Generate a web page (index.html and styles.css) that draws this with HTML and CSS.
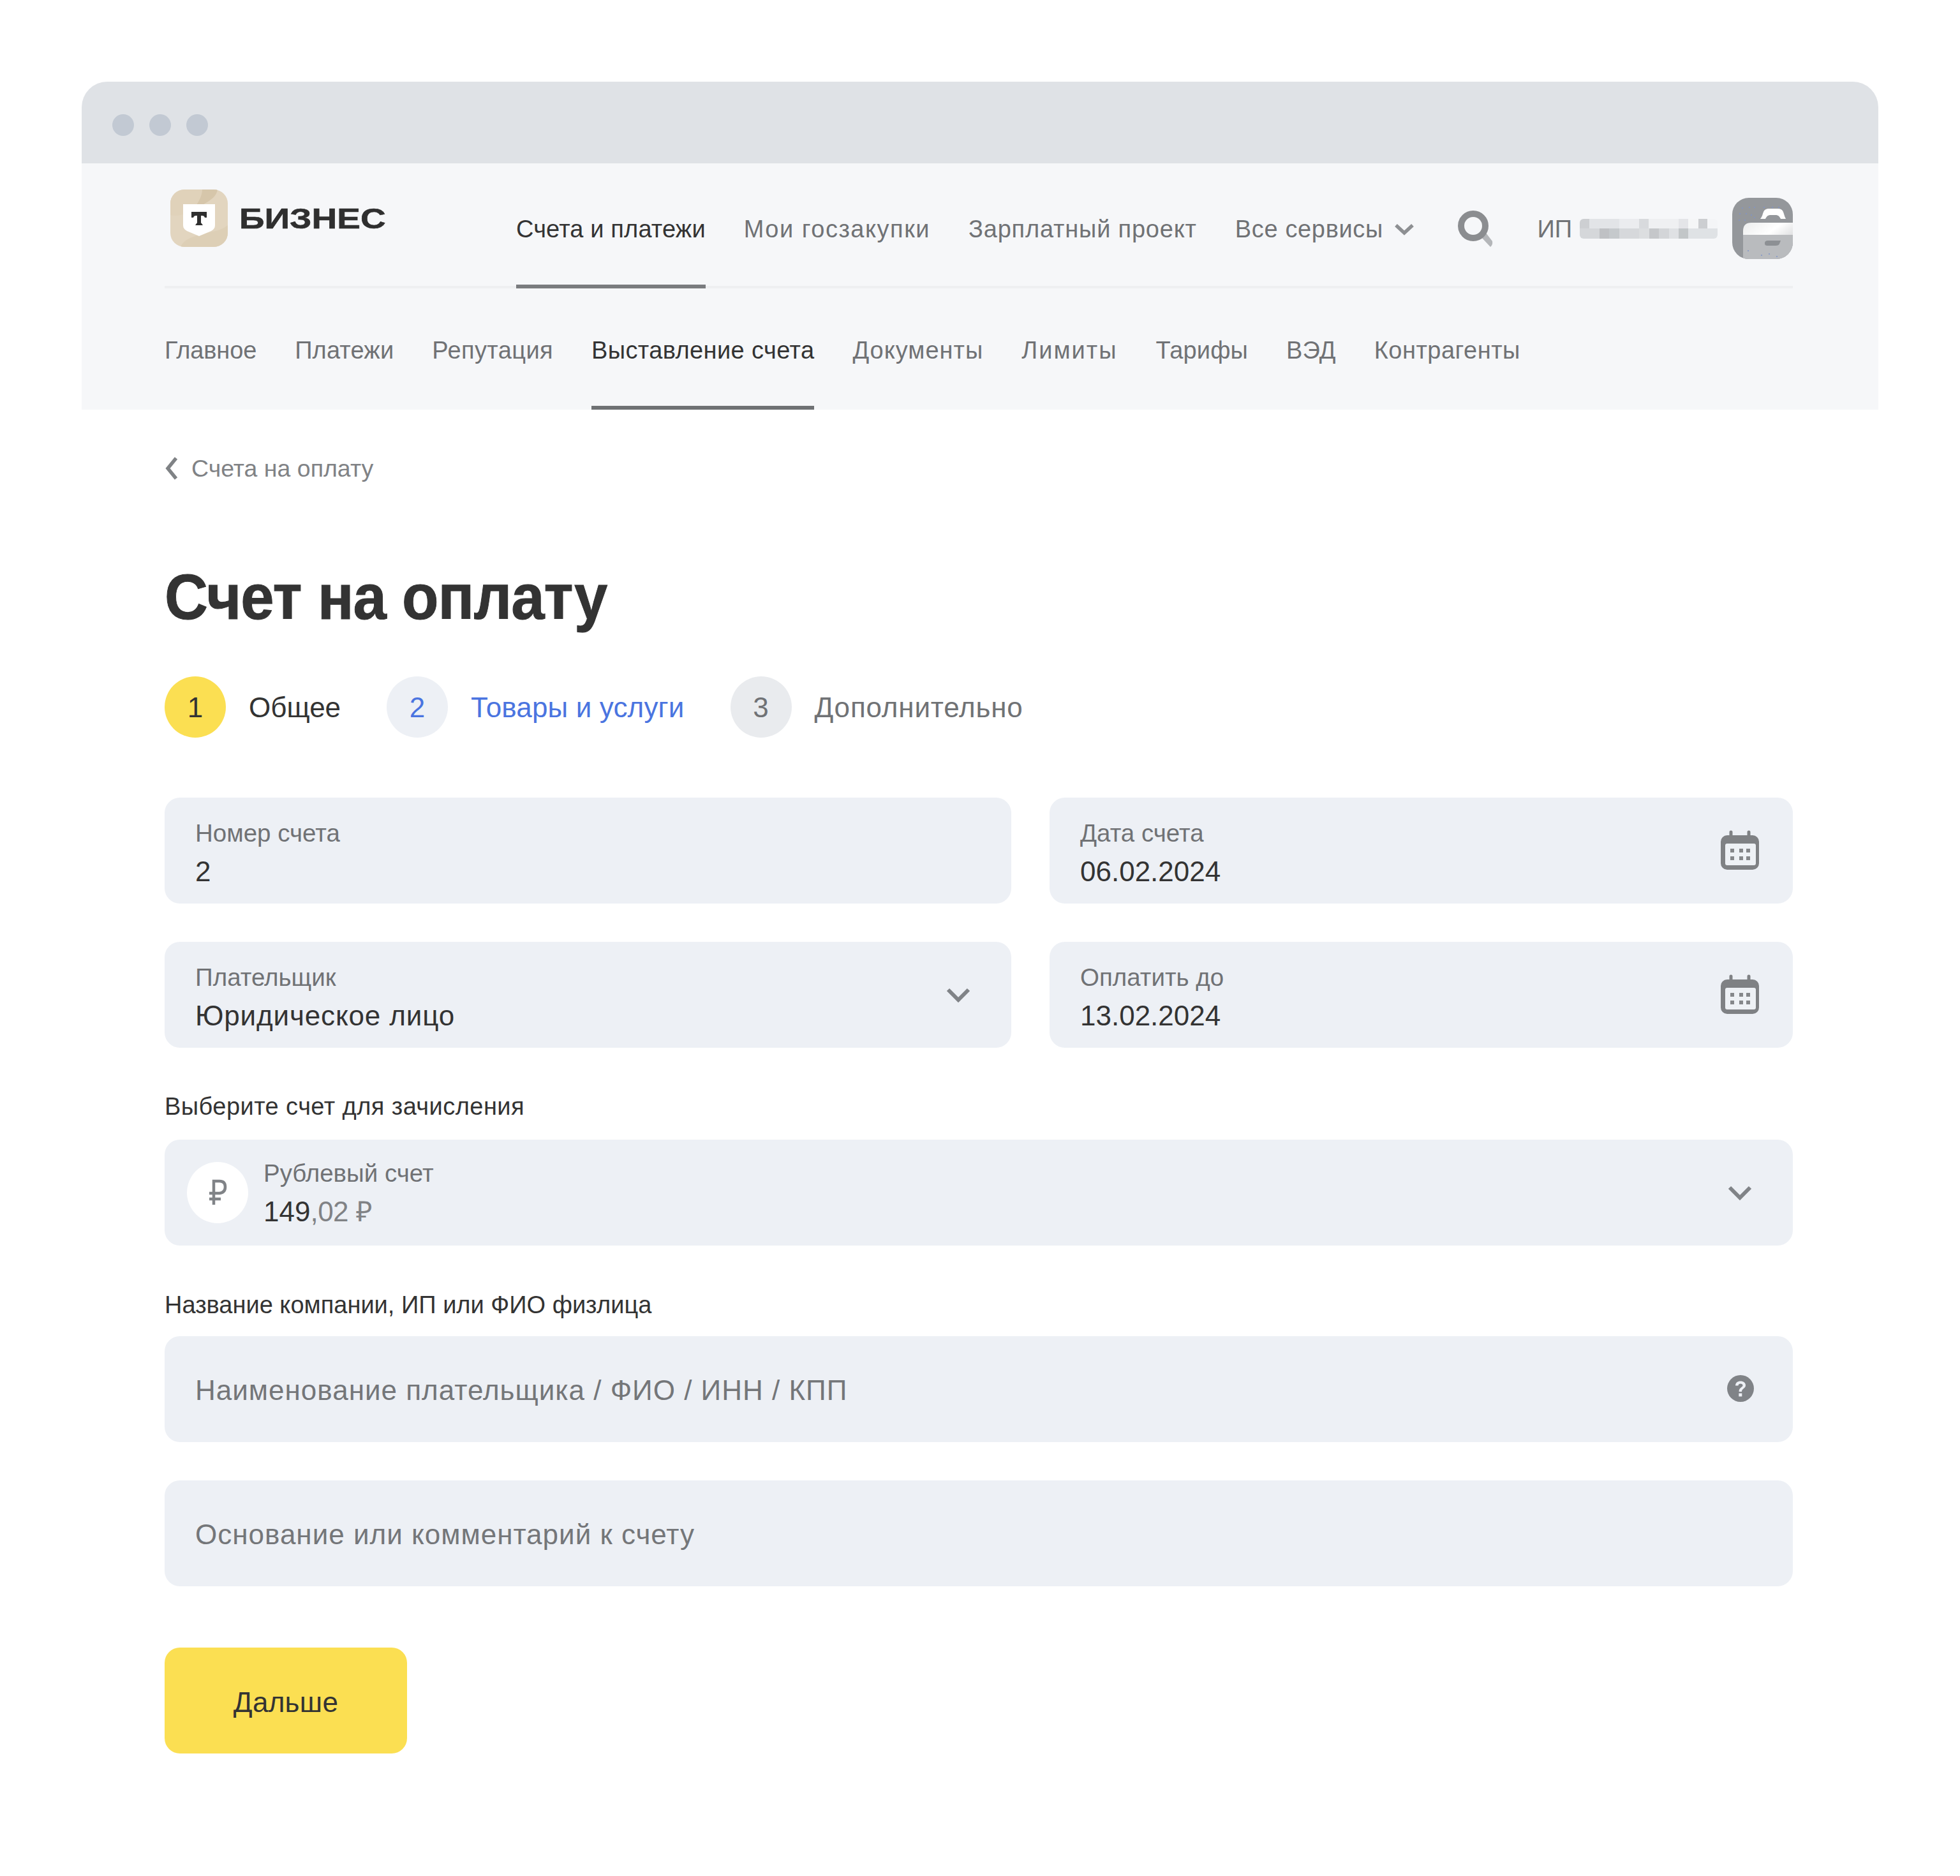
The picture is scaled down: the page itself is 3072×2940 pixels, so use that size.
FILE: index.html
```html
<!DOCTYPE html>
<html lang="ru">
<head>
<meta charset="utf-8">
<title>Счет на оплату</title>
<link rel="stylesheet" href="styles.css">
</head>
<body>
<div class="window">
  <div class="titlebar"><i class="dot"></i><i class="dot"></i><i class="dot"></i></div>
  <header class="header">
    <div class="toprow">
      <div class="brand">
        <svg class="logo" width="90" height="90" viewBox="0 0 90 90">
          <defs><clipPath id="logoclip"><rect width="90" height="90" rx="22"/></clipPath></defs>
          <g clip-path="url(#logoclip)">
            <rect width="90" height="90" fill="#e2d5bf"/>
            <path d="M0 0H74C72 12 62 17 50 24C30 36 14 44 0 40Z" fill="#e0d2ba"/>
            <path d="M50 0H74C72 10 66 15 54 22L36 32C44 20 50 10 50 0Z" fill="#d6c6aa"/>
            <path d="M90 56V90H16C20 80 30 76 42 72C60 66 78 66 90 56Z" fill="#ddcfb6"/>
          </g>
          <path d="M20 23H70V56Q70 62 64 65L45 73L26 65Q20 62 20 56Z" fill="#fff"/>
          <path d="M33 35H57V44H54Q53 41 50 41H48V52L51 56H39L42 52V41H40Q37 41 36 44H33Z" fill="#2f2f2f"/>
        </svg>
        <span class="brandname">БИЗНЕС</span>
      </div>
      <nav class="mainnav">
        <a class="navlink is-active">Счета и платежи</a>
        <a class="navlink ls-gz">Мои госзакупки</a>
        <a class="navlink ls-zp">Зарплатный проект</a>
        <a class="navlink ls-vs">Все сервисы
          <svg class="chev-nav" width="34" height="22" viewBox="0 0 34 22"><path d="M4 5L17 17L30 5" fill="none" stroke="#8d8f92" stroke-width="5.5"/></svg>
        </a>
      </nav>
      <svg class="search" width="56" height="58" viewBox="0 0 56 58">
        <path d="M36 41L44 35L54 48Q55 54 51 57Z" fill="#b4b6b9"/>
        <circle cx="24" cy="24" r="19" fill="none" stroke="#8b8d90" stroke-width="10"/>
      </svg>
      <div class="account">
        <span class="acc-ip">ИП</span>
        <svg class="acc-blur" width="216" height="31" viewBox="0 0 216 31">
          <defs><clipPath id="blurclip"><rect width="216" height="31" rx="6"/></clipPath></defs>
          <g clip-path="url(#blurclip)">
            <rect x="0" y="0" width="15" height="15" fill="#cdcfd2"/>
            <rect x="15" y="0" width="47" height="15" fill="#e2e4e7"/>
            <rect x="62" y="0" width="31" height="15" fill="#ebecef"/>
            <rect x="93" y="0" width="15" height="15" fill="#d8dadd"/>
            <rect x="108" y="0" width="47" height="15" fill="#eff0f2"/>
            <rect x="155" y="0" width="15" height="15" fill="#e4e5e8"/>
            <rect x="170" y="0" width="16" height="15" fill="#f5f6f7"/>
            <rect x="186" y="0" width="14" height="15" fill="#ccced1"/>
            <rect x="200" y="0" width="16" height="15" fill="#f4f5f7"/>
            <rect x="0" y="15" width="31" height="16" fill="#d5d7da"/>
            <rect x="31" y="15" width="15" height="16" fill="#bfc1c4"/>
            <rect x="46" y="15" width="16" height="16" fill="#c5c9cc"/>
            <rect x="62" y="15" width="31" height="16" fill="#d6d8db"/>
            <rect x="93" y="15" width="16" height="16" fill="#dcdee0"/>
            <rect x="109" y="15" width="15" height="16" fill="#c5c7ca"/>
            <rect x="124" y="15" width="16" height="16" fill="#d3d5d8"/>
            <rect x="140" y="15" width="15" height="16" fill="#dfe1e4"/>
            <rect x="155" y="15" width="15" height="16" fill="#c2c6c8"/>
            <rect x="170" y="15" width="46" height="16" fill="#dfe2e5"/>
          </g>
        </svg>
        <svg class="acc-avatar" width="95" height="96" viewBox="0 0 95 96">
          <defs>
            <clipPath id="avclip"><rect width="95" height="96" rx="26"/></clipPath>
            <linearGradient id="lid" x1="0" y1="0" x2="1" y2="1"><stop offset="0" stop-color="#eceded"/><stop offset=".4" stop-color="#fff"/><stop offset="1" stop-color="#b9bbbe"/></linearGradient>
          </defs>
          <g clip-path="url(#avclip)">
            <rect width="95" height="96" fill="#94979b"/>
            <path d="M44 33C50 27 46 17 58 17H72C82 17 80 27 84 33H76C74 29 72 27 68 27H60C56 27 54 29 52 33Z" fill="#fff"/>
            <path d="M17 96V52Q17 39 30 39H95V58H17Z" fill="url(#lid)"/>
            <rect x="17" y="58" width="78" height="38" fill="#b9bbbe"/>
            <path d="M51 71Q51 67 56 67H76L74 72Q73 75 68 75H55Q51 75 51 72Z" fill="#8d9094"/>
            <g fill="#7f93c8">
              <circle cx="16" cy="16" r="1"/><circle cx="27" cy="15" r="1"/><circle cx="35" cy="15" r="1"/><circle cx="50" cy="15" r="1"/><circle cx="63" cy="15" r="1"/><circle cx="73" cy="15" r="1"/>
              <circle cx="12" cy="25" r="1"/><circle cx="22" cy="25" r="1"/><circle cx="30" cy="27" r="1"/><circle cx="11" cy="35" r="1"/><circle cx="20" cy="35" r="1"/><circle cx="35" cy="31" r="1"/>
              <circle cx="25" cy="83" r="1"/><circle cx="46" cy="90" r="1"/><circle cx="58" cy="88" r="1"/><circle cx="70" cy="92" r="1"/>
            </g>
          </g>
        </svg>
      </div>
    </div>
    <nav class="subnav">
      <a class="sublink ls-gl">Главное</a>
      <a class="sublink">Платежи</a>
      <a class="sublink ls-rep">Репутация</a>
      <a class="sublink ls-vys is-active">Выставление счета</a>
      <a class="sublink ls-doc">Документы</a>
      <a class="sublink ls-lim">Лимиты</a>
      <a class="sublink">Тарифы</a>
      <a class="sublink">ВЭД</a>
      <a class="sublink ls-kon">Контрагенты</a>
    </nav>
  </header>
  <main class="content">
    <a class="back">
      <svg width="22" height="36" viewBox="0 0 22 36"><path d="M18 2L5 18L18 34" fill="none" stroke="#7f8285" stroke-width="5.5"/></svg>
      Счета на оплату
    </a>
    <h1 class="title">Счет на оплату</h1>
    <div class="steps">
      <div class="step"><span class="num num-1">1</span><span class="step-text">Общее</span></div>
      <div class="step"><span class="num num-2">2</span><span class="step-text step-blue">Товары и услуги</span></div>
      <div class="step"><span class="num num-3">3</span><span class="step-text step-grey">Дополнительно</span></div>
    </div>
    <div class="grid">
      <div class="field"><div class="field-body"><div class="lbl">Номер счета</div><div class="val">2</div></div></div>
      <div class="field"><div class="field-body"><div class="lbl">Дата счета</div><div class="val">06.02.2024</div></div>
        <svg class="cal" width="60" height="62" viewBox="0 0 60 62"><path d="M13.500 3a2.500 2.500 0 0 1 5 0v5h23V3a2.500 2.500 0 0 1 5 0v5h3.500A10 10 0 0 1 60 18v34a10 10 0 0 1-10 10H10A10 10 0 0 1 0 52V18A10 10 0 0 1 10 8h3.500Z" fill="#7f8184"/><rect x="7" y="21" width="48" height="34" rx="3" fill="#eef1f5"/><g fill="#85878a"><rect x="15" y="29" width="6" height="6"/><rect x="29" y="29" width="6" height="6"/><rect x="40" y="29" width="6" height="6"/><rect x="15" y="41" width="6" height="6"/><rect x="29" y="41" width="6" height="6"/><rect x="40" y="41" width="6" height="6"/></g></svg>
      </div>
      <div class="field"><div class="field-body"><div class="lbl">Плательщик</div><div class="val ls-val">Юридическое лицо</div></div>
        <svg class="chev" width="40" height="26" viewBox="0 0 40 26"><path d="M4 5L20 21L36 5" fill="none" stroke="#808387" stroke-width="6"/></svg>
      </div>
      <div class="field"><div class="field-body"><div class="lbl">Оплатить до</div><div class="val">13.02.2024</div></div>
        <svg class="cal" width="60" height="62" viewBox="0 0 60 62"><path d="M13.500 3a2.500 2.500 0 0 1 5 0v5h23V3a2.500 2.500 0 0 1 5 0v5h3.500A10 10 0 0 1 60 18v34a10 10 0 0 1-10 10H10A10 10 0 0 1 0 52V18A10 10 0 0 1 10 8h3.500Z" fill="#7f8184"/><rect x="7" y="21" width="48" height="34" rx="3" fill="#eef1f5"/><g fill="#85878a"><rect x="15" y="29" width="6" height="6"/><rect x="29" y="29" width="6" height="6"/><rect x="40" y="29" width="6" height="6"/><rect x="15" y="41" width="6" height="6"/><rect x="29" y="41" width="6" height="6"/><rect x="40" y="41" width="6" height="6"/></g></svg>
      </div>
    </div>
    <div class="section-label label-first">Выберите счет для зачисления</div>
    <div class="field field-acc">
      <span class="rub-circle">
        <svg width="30" height="42" viewBox="0 0 30 42"><path d="M9 40V3H18Q27 3 27 12T18 22H2M2 31H20" fill="none" stroke="#808387" stroke-width="4.5"/></svg>
      </span>
      <div class="field-body"><div class="lbl">Рублевый счет</div><div class="val">149<span class="val-dim">,02 ₽</span></div></div>
      <svg class="chev" width="40" height="26" viewBox="0 0 40 26"><path d="M4 5L20 21L36 5" fill="none" stroke="#808387" stroke-width="6"/></svg>
    </div>
    <div class="section-label label-second">Название компании, ИП или ФИО физлица</div>
    <div class="field"><div class="field-body"><div class="ph">Наименование плательщика / ФИО / ИНН / КПП</div></div>
      <svg class="help" width="42" height="42" viewBox="0 0 42 42"><circle cx="21" cy="21" r="21" fill="#808387"/><path d="M13 16.500C13 12 16.500 9.500 21 9.500S29 12 29 16C29 21 23 21 23 26H18.500C18.500 19 24.500 19.500 24.500 16C24.500 14.500 23 13.500 21 13.500S17.500 14.700 17.500 16.500Z" fill="#edf0f5"/><rect x="18.300" y="28.500" width="5" height="5" fill="#edf0f5"/></svg>
    </div>
    <div class="field field-comment"><div class="field-body"><div class="ph">Основание или комментарий к счету</div></div></div>
    <button class="next">Дальше</button>
  </main>
</div>
</body>
</html>
```
FILE: styles.css
```css
* { box-sizing: border-box; }
html, body { margin: 0; background: #fff; }
body {
  width: 3072px;
  height: 2940px;
  padding: 128px;
  font-family: "Liberation Sans", Arial, sans-serif;
  color: #333;
}
.window { width: 2816px; }
.titlebar {
  height: 128px;
  background: #dfe2e6;
  border-radius: 40px 40px 0 0;
  display: flex;
  align-items: center;
  gap: 24px;
  padding: 8px 0 0 48px;
}
.dot { width: 34px; height: 34px; border-radius: 50%; background: #c2c9d3; }
.header { height: 386px; background: #f6f7f9; padding: 0 134px 0 130px; }
.toprow {
  height: 196px;
  display: flex;
  border-bottom: 4px solid #eeeff1;
}
.brand { width: 551px; display: flex; align-items: center; height: 90px; margin-top: 41px; padding-left: 9px; flex: none; }
.logo { flex: none; }
.brandname {
  margin-left: 18px;
  padding-top: 2px;
  font-size: 44px;
  font-weight: 700;
  color: #2f2f2f;
  -webkit-text-stroke: .6px #2f2f2f;
  transform: scaleX(1.25);
  transform-origin: left center;
}
.mainnav { display: flex; gap: 60px; height: 196px; flex: none; }
.navlink {
  font-size: 38px;
  color: #707275;
  line-height: 1;
  padding-top: 84px;
  display: flex;
  align-items: flex-start;
  white-space: nowrap;
}
.navlink.is-active { color: #333; border-bottom: 6px solid #7a7c7f; letter-spacing: .15px; }
.ls-gz { letter-spacing: 1.5px; }
.ls-zp { letter-spacing: .8px; }
.ls-vs { letter-spacing: .65px; }
.chev-nav { margin: 8px 0 0 16px; }
.search { margin: 74px 0 0 67px; flex: none; }
.account { display: flex; margin-left: auto; align-items: flex-start; }
.acc-ip { font-size: 38px; line-height: 1; color: #707275; padding-top: 84px; }
.acc-blur { margin: 87px 0 0 12px; }
.acc-avatar { margin: 54px 0 0 23px; }
.subnav { display: flex; gap: 60px; height: 190px; }
.sublink {
  font-size: 38px;
  line-height: 1;
  letter-spacing: .15px;
  color: #707275;
  padding-top: 78px;
  white-space: nowrap;
}
.sublink.is-active { color: #333; border-bottom: 6px solid #6f7174; }
.sublink.ls-gl { letter-spacing: -.15px; }
.sublink.ls-rep { letter-spacing: .4px; }
.sublink.ls-vys { letter-spacing: .4px; }
.sublink.ls-doc { letter-spacing: 1px; }
.sublink.ls-lim { letter-spacing: 2px; }
.sublink.ls-kon { letter-spacing: .5px; }
.content { padding: 0 134px 0 130px; }
.back {
  display: flex;
  align-items: center;
  gap: 20px;
  margin-top: 74px;
  height: 36px;
  font-size: 37.500px;
  color: #808285;
}
.title {
  margin: 125px 0 0;
  font-size: 100px;
  line-height: 116px;
  font-weight: 700;
  letter-spacing: -1px;
  color: #333;
  -webkit-text-stroke: 1px #333;
  transform: scaleX(.94);
  transform-origin: left center;
}
.steps { display: flex; gap: 72px; margin-top: 67px; }
.step { display: flex; align-items: center; gap: 36px; }
.num {
  width: 96px;
  height: 96px;
  border-radius: 50%;
  display: flex;
  align-items: center;
  justify-content: center;
  padding-top: 2px;
  font-size: 44px;
}
.num-1 { background: #fbdf52; color: #333; }
.num-2 { background: #edf0f5; color: #4a74e0; }
.num-3 { background: #e9ebee; color: #707275; }
.step-text { font-size: 44px; padding-top: 2px; color: #333; }
.step-blue { color: #4a74e0; letter-spacing: .15px; }
.step-grey { color: #707275; letter-spacing: .8px; }
.grid {
  display: grid;
  grid-template-columns: 1327px 1165px;
  gap: 60px;
  margin-top: 94px;
}
.field {
  height: 166px;
  background: #edf0f5;
  border-radius: 24px;
  display: flex;
  align-items: center;
  padding: 0 48px;
}
.field-body { flex: 1; min-width: 0; margin-top: 3px; }
.lbl { font-size: 38.500px; line-height: 48px; padding-top: 7px; color: #707275; }
.field-acc .lbl { padding-top: 0; }
.val { font-size: 44px; line-height: 56px; margin-top: 8px; color: #333; }
.ls-val { letter-spacing: .85px; }
.val-dim { color: #808285; letter-spacing: -.5px; }
.ph { font-size: 44px; line-height: 56px; letter-spacing: 1px; color: #747679; padding-top: 1px; }
.cal { flex: none; margin-right: 5px; margin-top: -2px; }
.chev { flex: none; margin-right: 15px; }
.help { flex: none; margin-right: 13px; margin-top: -2px; }
.section-label { font-size: 38px; line-height: 44px; color: #333; }
.label-first { margin-top: 70px; margin-bottom: 30px; letter-spacing: .44px; }
.label-second { margin-top: 71px; margin-bottom: 27px; }
.field-acc { padding-left: 35px; }
.rub-circle {
  width: 96px;
  height: 96px;
  border-radius: 50%;
  background: #fff;
  display: flex;
  align-items: center;
  justify-content: center;
  margin-right: 24px;
  flex: none;
}
.field-comment { margin-top: 60px; }
.next {
  display: block;
  width: 380px;
  height: 166px;
  margin-top: 96px;
  padding-top: 6px;
  border: 0;
  border-radius: 24px;
  background: #fbdf52;
  font-family: inherit;
  font-size: 44px;
  letter-spacing: .3px;
  color: #333;
}
```
